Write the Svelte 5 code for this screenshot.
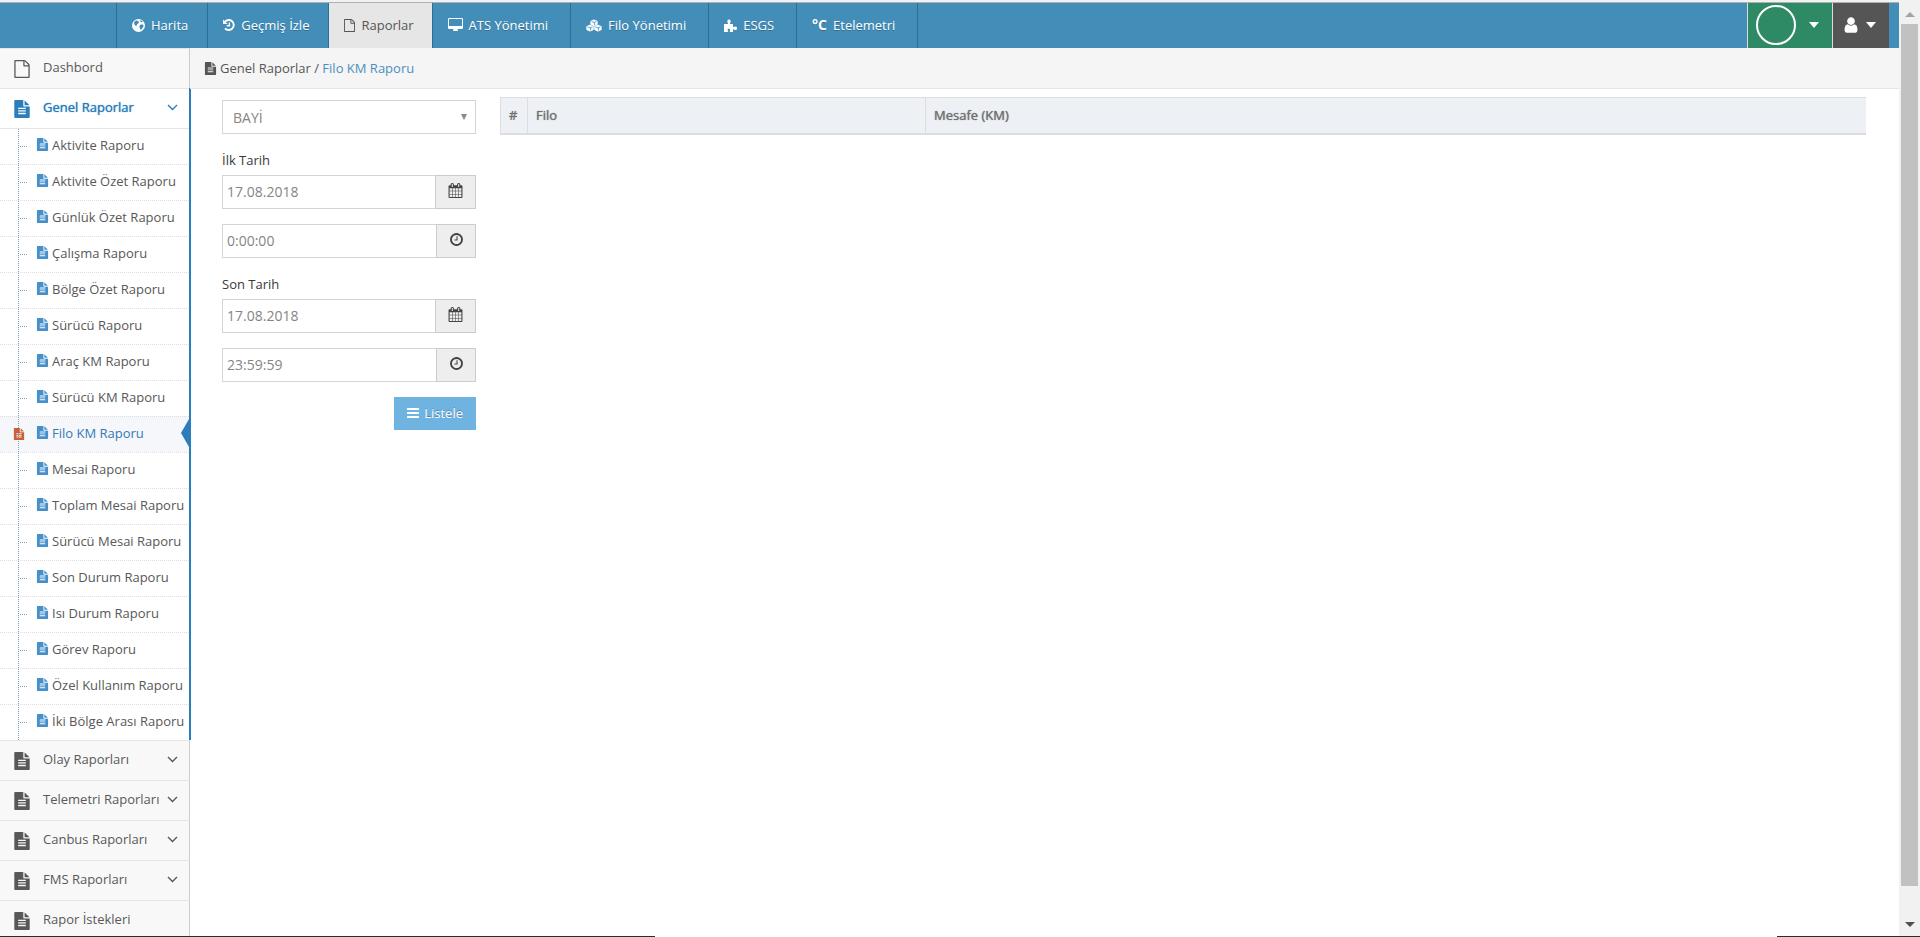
<script lang="ts">
	const icons = {
		file: 'M1596 380q28 28 48 76t20 88v1152q0 40-28 68t-68 28h-1344q-40 0-68-28t-28-68v-1600q0-40 28-68t68-28h896q40 0 88 20t76 48zm-444-244v376h376q-10-29-22-41l-313-313q-12-12-41-22zm384 1528v-1024h-416q-40 0-68-28t-28-68v-416h-768v1536h1280z',
		fileText: 'M1596 476q14 14 28 36h-472v-472q22 14 36 28zm-476 164h544v1056q0 40-28 68t-68 28h-1344q-40 0-68-28t-28-68v-1600q0-40 28-68t68-28h800v544q0 40 28 68t68 28zm160 736v-64q0-14-9-23t-23-9h-704q-14 0-23 9t-9 23v64q0 14 9 23t23 9h704q14 0 23-9t9-23zm0-256v-64q0-14-9-23t-23-9h-704q-14 0-23 9t-9 23v64q0 14 9 23t23 9h704q14 0 23-9t9-23zm0-256v-64q0-14-9-23t-23-9h-704q-14 0-23 9t-9 23v64q0 14 9 23t23 9h704q14 0 23-9t9-23z',
		clock: 'M1024 544v448q0 14-9 23t-23 9h-320q-14 0-23-9t-9-23v-64q0-14 9-23t23-9h224v-352q0-14 9-23t23-9h64q14 0 23 9t9 23zm416 352q0-148-73-273t-198-198-273-73-273 73-198 198-73 273 73 273 198 198 273 73 273-73 198-198 73-273zm224 0q0 209-103 385.500t-279.500 279.500-385.500 103-385.500-103-279.500-279.500-103-385.500 103-385.500 279.500-279.500 385.500-103 385.500 103 279.500 279.500 103 385.500z',
		calendar: 'M192 1664h288v-288h-288v288zm352 0h320v-288h-320v288zm-352-352h288v-320h-288v320zm352 0h320v-320h-320v320zm-352-384h288v-288h-288v288zm736 736h320v-288h-320v288zm-384-736h320v-288h-320v288zm768 736h288v-288h-288v288zm-384-352h320v-320h-320v320zm-352-864v-288q0-13-9.500-22.500t-22.500-9.500h-64q-13 0-22.500 9.500t-9.500 22.500v288q0 13 9.500 22.500t22.500 9.500h64q13 0 22.500-9.500t9.500-22.500zm736 864h288v-320h-288v320zm-384-384h320v-288h-320v288zm384 0h288v-288h-288v288zm32-480v-288q0-13-9.500-22.500t-22.500-9.500h-64q-13 0-22.500 9.500t-9.500 22.500v288q0 13 9.500 22.500t22.500 9.500h64q13 0 22.500-9.500t9.500-22.500zm384-64v1280q0 52-38 90t-90 38h-1408q-52 0-90-38t-38-90v-1280q0-52 38-90t90-38h128v-96q0-66 47-113t113-47h64q66 0 113 47t47 113v96h384v-96q0-66 47-113t113-47h64q66 0 113 47t47 113v96h128q52 0 90 38t38 90z',
		desktop: 'M1728 992v-832q0-13-9.500-22.500t-22.500-9.500h-1600q-13 0-22.500 9.500t-9.500 22.500v832q0 13 9.500 22.500t22.500 9.500h1600q13 0 22.500-9.500t9.500-22.500zm128-832v1088q0 66-47 113t-113 47h-544q0 37 16 77.500t32 71 16 43.500q0 26-19 45t-45 19h-512q-26 0-45-19t-19-45q0-14 16-44t32-70 16-78h-544q-66 0-113-47t-47-113v-1088q0-66 47-113t113-47h1600q66 0 113 47t47 113z',
		user: 'M1536 1399q0 109-62.500 187t-150.500 78h-854q-88 0-150.500-78t-62.500-187q0-85 8.500-160.500t31.500-152 58.500-131 94-89 134.500-34.500q131 128 313 128t313-128q76 0 134.500 34.500t94 89 58.500 131 31.500 152 8.500 160.500zm-256-887q0 159-112.500 271.500t-271.500 112.500-271.500-112.500-112.500-271.500 112.500-271.500 271.500-112.500 271.500 112.500 112.500 271.500z',
		bars: 'M1664 1344v128q0 26-19 45t-45 19h-1408q-26 0-45-19t-19-45v-128q0-26 19-45t45-19h1408q26 0 45 19t19 45zm0-512v128q0 26-19 45t-45 19h-1408q-26 0-45-19t-19-45v-128q0-26 19-45t45-19h1408q26 0 45 19t19 45zm0-512v128q0 26-19 45t-45 19h-1408q-26 0-45-19t-19-45v-128q0-26 19-45t45-19h1408q26 0 45 19t19 45z'
	};

	const navItems = [
		{ icon: 'globe', label: 'Harita' },
		{ icon: 'history', label: 'Geçmiş İzle' },
		{ icon: 'file', label: 'Raporlar', active: true },
		{ icon: 'desktop', label: 'ATS Yönetimi' },
		{ icon: 'cubes', label: 'Filo Yönetimi' },
		{ icon: 'puzzle', label: 'ESGS' },
		{ icon: 'degree', label: 'Etelemetri' }
	];

	const reports = [
		'Aktivite Raporu',
		'Aktivite Özet Raporu',
		'Günlük Özet Raporu',
		'Çalışma Raporu',
		'Bölge Özet Raporu',
		'Sürücü Raporu',
		'Araç KM Raporu',
		'Sürücü KM Raporu',
		'Filo KM Raporu',
		'Mesai Raporu',
		'Toplam Mesai Raporu',
		'Sürücü Mesai Raporu',
		'Son Durum Raporu',
		'Isı Durum Raporu',
		'Görev Raporu',
		'Özel Kullanım Raporu',
		'İki Bölge Arası Raporu'
	];

	const groups = [
		{ label: 'Olay Raporları', arrow: true },
		{ label: 'Telemetri Raporları', arrow: true },
		{ label: 'Canbus Raporları', arrow: true },
		{ label: 'FMS Raporları', arrow: true },
		{ label: 'Rapor İstekleri', arrow: false }
	];

	let current = $state('Filo KM Raporu');
	let open = $state(true);
	let firstDate = $state('17.08.2018');
	let firstTime = $state('0:00:00');
	let lastDate = $state('17.08.2018');
	let lastTime = $state('23:59:59');
</script>

{#snippet icon(name: string, size: number)}
	<svg width={size} height={size} viewBox="0 0 1792 1792" fill="currentColor" aria-hidden="true">
		<path d={icons[name]} />
	</svg>
{/snippet}

{#snippet chevron()}
	<svg class="chevron" width="11" height="7" viewBox="0 0 11 7" fill="none" stroke="currentColor" stroke-width="1.4" aria-hidden="true">
		<path d="M1 1l4.500 4.500L10 1" />
	</svg>
{/snippet}

{#snippet caret()}
	<svg width="10" height="6" viewBox="0 0 10 6" fill="currentColor" aria-hidden="true">
		<path d="M0 0h10L5 6z" />
	</svg>
{/snippet}

{#snippet navIcon(name: string)}
	{#if name === 'globe'}
		<svg width="13" height="13" viewBox="0 0 13 13" aria-hidden="true">
			<circle cx="6.500" cy="6.500" r="6.500" fill="#fff" />
			<path d="M2 3.200L4 1.600l1.600.2 1.400 1-.4 1.500-1.300.8-.4 1.300-1.400.3-1.100-1.100zM7.800 1.200l1.600.4 1.300 1.200-.9.500-1.200-.5zM7.200 7.200l1.500-1.700 2 .1.900.9-.5 1.800-1.600 1.900-1.300.6-.3-1.700z" fill="#438eb9" />
		</svg>
	{:else if name === 'history'}
		<svg width="12" height="12" viewBox="0 0 12 12" fill="none" stroke="#fff" stroke-width="1.900" aria-hidden="true">
			<path d="M1.800 2.900A5 5 0 1 1 2 9.300" />
			<path d="M6.400 3.400v3.300H3.700" stroke-width="1.400" />
			<path d="M0 .4V5h4.600z" fill="#fff" stroke="none" />
		</svg>
	{:else if name === 'desktop'}
		<svg width="15" height="14" viewBox="-64 0 1920 1792" fill="#fff" aria-hidden="true">
			<path d={icons.desktop} />
		</svg>
	{:else if name === 'cubes'}
		<svg width="16" height="13" viewBox="0 0 17 13" aria-hidden="true">
			<g fill="#fff" stroke="#fff" stroke-width=".8" stroke-linejoin="round">
				<path d="M8.500.5l3.400 1.400v3.400L8.500 6.900 5.100 5.300V1.900z" />
				<path d="M4.300 6l3.500 1.500v3.400l-3.500 1.600L.8 10.900V7.500z" />
				<path d="M12.700 6l3.500 1.500v3.400l-3.500 1.600-3.500-1.600V7.500z" />
			</g>
			<g fill="none" stroke="#438eb9" stroke-width=".9">
				<path d="M6 2.300l2.500 1 2.500-1M9.100 6V3.600M1.700 8l2.600 1.100L6.900 8M4.900 11.700V9.200M10.100 8l2.600 1.100L15.300 8M13.300 11.700V9.200" />
			</g>
		</svg>
	{:else if name === 'puzzle'}
		<svg width="13" height="13" viewBox="0 0 13 13" fill="#fff" aria-hidden="true">
			<path d="M0 5h3.600c.5 0 .7-.4.4-.8C3.300 3.200 3.100 2.300 3.500 1.400 4 .3 6 .3 6.500 1.400c.4.900.2 1.800-.5 2.800-.3.400-.1.800.4.800H9v2.500c0 .5.500.8 1 .4.900-.7 2.200-.7 2.700.2.400.7.400 1.700 0 2.300-.5.900-1.800.8-2.700.1-.5-.4-1-.1-1 .4v2H6.300c-.5 0-.8-.4-.5-.9.600-1 .5-2.300-.9-2.300s-1.600 1.300-.9 2.300c.3.500 0 .9-.5.900H0z" />
		</svg>
	{:else if name === 'degree'}
		<span class="degree">°C</span>
	{:else}
		<svg width="11" height="13" viewBox="128 0 1536 1792" fill="currentColor" aria-hidden="true">
			<path d={icons.file} />
		</svg>
	{/if}
{/snippet}

<div class="window">
	<div class="page">
		<header>
			<nav>
				{#each navItems as item}
					<a href="#top" class:active={item.active}>{@render navIcon(item.icon)}{item.label}</a>
				{/each}
			</nav>
			<button class="company" type="button" aria-label="Firma">
				<span class="ring"></span>
				{@render caret()}
			</button>
			<button class="account" type="button" aria-label="Kullanıcı">
				{@render icon('user', 18)}
				{@render caret()}
			</button>
		</header>

		<div class="body">
			<aside>
				<a class="group" href="#dashbord">{@render icon('file', 18)}<span>Dashbord</span></a>
				<div class="opened">
					<button class="group current" type="button" onclick={() => (open = !open)}>
						{@render icon('fileText', 18)}<span>Genel Raporlar</span>{@render chevron()}
					</button>
					{#if open}
						<ul>
							{#each reports as report}
								<li class:selected={report === current}>
									<a href="#rapor" onclick={() => (current = report)}>
										{@render icon('fileText', 13)}{report}
									</a>
									{#if report === current}
										<span class="marker">{@render icon('fileText', 12)}</span>
									{/if}
								</li>
							{/each}
						</ul>
					{/if}
				</div>
				{#each groups as group}
					<a class="group" href="#grup">
						{@render icon('fileText', 18)}<span>{group.label}</span>
						{#if group.arrow}{@render chevron()}{/if}
					</a>
				{/each}
			</aside>

			<main>
				<div class="breadcrumb">
					{@render icon('fileText', 13)}
					<span>Genel Raporlar / <a href="#rapor">Filo KM Raporu</a></span>
				</div>
				<div class="content">
					<form onsubmit={(e) => e.preventDefault()}>
						<div class="select">
							<select aria-label="Bayi">
								<option>BAYİ</option>
							</select>
						</div>
						<label for="first-date">İlk Tarih</label>
						<div class="field">
							<input id="first-date" type="text" bind:value={firstDate} />
							<button type="button" aria-label="Takvim">{@render icon('calendar', 15)}</button>
						</div>
						<div class="field">
							<input type="text" aria-label="İlk saat" bind:value={firstTime} />
							<button class="time" type="button" aria-label="Saat">{@render icon('clock', 15)}</button>
						</div>
						<label for="last-date">Son Tarih</label>
						<div class="field">
							<input id="last-date" type="text" bind:value={lastDate} />
							<button type="button" aria-label="Takvim">{@render icon('calendar', 15)}</button>
						</div>
						<div class="field">
							<input type="text" aria-label="Son saat" bind:value={lastTime} />
							<button class="time" type="button" aria-label="Saat">{@render icon('clock', 15)}</button>
						</div>
						<button class="submit" type="submit">{@render icon('bars', 14)}Listele</button>
					</form>

					<table>
						<thead>
							<tr>
								<th class="no">#</th>
								<th class="fleet">Filo</th>
								<th>Mesafe (KM)</th>
							</tr>
						</thead>
					</table>
				</div>
			</main>
		</div>
	</div>

	<div class="scrollbar" aria-hidden="true">
		<svg width="10" height="5" viewBox="0 0 10 5"><path d="M0 5h10L5 0z" fill="#a3a3a3" /></svg>
		<div class="thumb"></div>
		<svg width="10" height="5" viewBox="0 0 10 5"><path d="M0 0h10L5 5z" fill="#505050" /></svg>
	</div>
	<div class="edge left"></div>
	<div class="edge right"></div>
</div>

<style>
	:global(body) {
		background: #fff;
	}

	.window {
		position: relative;
		display: flex;
		box-sizing: border-box;
		height: 100vh;
		overflow: hidden;
		border-top: 2px solid #f2f2f2;
		font-family: 'Open Sans', sans-serif;
		font-size: 13px;
		line-height: 20px;
		color: #393939;
	}

	.window * {
		box-sizing: border-box;
	}

	.page {
		flex: 1;
		display: flex;
		flex-direction: column;
		min-width: 0;
		border-top: 1px solid #b0b0b0;
	}

	a {
		color: inherit;
		text-decoration: none;
	}

	button,
	input,
	select {
		font: inherit;
		margin: 0;
		border-radius: 0;
	}

	svg {
		flex: none;
	}

	header {
		display: flex;
		height: 45px;
		flex: none;
		padding-right: 10px;
		background: #438eb9;
	}

	nav {
		display: flex;
		flex: 1;
		padding-left: 116px;
	}

	nav a {
		display: flex;
		align-items: center;
		gap: 6px;
		padding: 0 19px 1px 15px;
		border-left: 1px solid #2c6f94;
		color: #fff;
		text-shadow: 0 1px 0 rgba(0, 0, 0, 0.25);
	}

	nav a.active {
		padding-right: 18px;
		background: #e6e6e6;
		color: #555;
		text-shadow: none;
	}

	nav a.active ~ a {
		padding-right: 22px;
	}

	nav a:last-child {
		border-right: 1px solid #2c6f94;
	}

	.degree {
		font-weight: bold;
		font-size: 14px;
	}

	header button {
		display: flex;
		align-items: center;
		border: 0;
		border-left: 1px solid #ddd;
		color: #fff;
	}

	.company {
		gap: 13px;
		width: 85px;
		padding: 0 0 2px 8px;
		background: #2e8965;
	}

	.ring {
		width: 40px;
		height: 40px;
		border: 2px solid #fff;
		border-radius: 50%;
	}

	.account {
		gap: 6px;
		width: 57px;
		padding: 0 0 2px 9px;
		background: #555;
	}

	.body {
		display: flex;
		flex: 1;
		min-height: 0;
	}

	aside {
		flex: none;
		width: 191px;
		overflow: hidden;
		color: #585858;
	}

	.group {
		display: flex;
		align-items: center;
		width: 190px;
		height: 40px;
		padding: 0 11px 0 13px;
		border: 0;
		border-top: 1px solid #e5e5e5;
		border-right: 1px solid #ccc;
		background: #f8f8f8;
		text-align: left;
	}

	.group span {
		flex: 1;
		margin-left: 12px;
		padding-bottom: 3px;
		white-space: nowrap;
	}

	.chevron {
		margin-bottom: 2px;
	}

	.opened {
		border-right: 2px solid #2b7dbc;
	}

	.group.current {
		width: 100%;
		border-right: 0;
		background: #fff;
		color: #2b7dbc;
		text-shadow: 0 0 1px #2b7dbc;
	}

	ul {
		position: relative;
		margin: 0;
		padding: 0;
		border-top: 1px solid #e5e5e5;
		list-style: none;
	}

	/* tree line running down the submenu */
	ul::before {
		content: '';
		position: absolute;
		z-index: 1;
		top: 0;
		bottom: 0;
		left: 18px;
		border-left: 1px dotted #7e9db8;
	}

	li {
		position: relative;
		height: 36px;
		border-top: 1px dotted #ddd;
	}

	li:first-child {
		height: 35px;
		border-top: 0;
	}

	li::before {
		content: '';
		position: absolute;
		top: 17px;
		left: 20px;
		width: 7px;
		border-top: 1px dotted #7e9db8;
	}

	li a {
		display: flex;
		align-items: center;
		gap: 3px;
		height: 100%;
		padding: 0 0 4px 36px;
		white-space: nowrap;
	}

	li a :global(svg) {
		color: #478fca;
	}

	li.selected {
		background: #f5f7fa;
		color: #337ab7;
	}

	li.selected::before {
		display: none;
	}

	li.selected::after {
		content: '';
		position: absolute;
		top: 2px;
		right: 0;
		border: 14px solid transparent;
		border-left: 0;
		border-right: 8px solid #2b7dbc;
	}

	.marker {
		position: absolute;
		z-index: 2;
		top: 11px;
		left: 13px;
		display: flex;
		color: #c86139;
	}

	main {
		flex: 1;
		min-width: 0;
		margin-left: -1px;
	}

	.breadcrumb {
		display: flex;
		align-items: center;
		gap: 3px;
		height: 41px;
		padding-left: 14px;
		border-bottom: 1px solid #e5e5e5;
		background: #f5f5f5;
		color: #555;
	}

	.breadcrumb a {
		color: #4c8fbd;
	}

	.content {
		display: flex;
		align-items: flex-start;
		gap: 24px;
		padding: 8px 33px 0 32px;
	}

	form {
		flex: none;
		display: flex;
		flex-direction: column;
		width: 254px;
		padding-top: 3px;
	}

	.select {
		position: relative;
		margin-bottom: 15px;
	}

	.select::after {
		content: '';
		position: absolute;
		top: 14px;
		right: 9px;
		border: 3px solid transparent;
		border-top: 6px solid #888;
		border-bottom: 0;
		pointer-events: none;
	}

	select {
		display: block;
		width: 100%;
		height: 34px;
		padding: 2px 10px 0;
		border: 1px solid #d5d5d5;
		background: #fff;
		color: #858585;
		font-size: 14px;
		appearance: none;
	}

	label {
		padding: 1px 0 5px;
	}

	.field {
		display: flex;
		height: 34px;
		margin-bottom: 15px;
	}

	.field input {
		flex: 1;
		min-width: 0;
		padding: 0 4px;
		border: 1px solid #d5d5d5;
		border-right: 0;
		color: #858585;
		font-size: 14px;
	}

	.field button {
		display: flex;
		align-items: center;
		justify-content: center;
		width: 41px;
		padding: 0 0 3px;
		border: 1px solid #ccc;
		background: #eee;
		color: #444;
	}

	.field button.time {
		width: 40px;
	}

	.submit {
		display: flex;
		align-items: center;
		align-self: flex-end;
		gap: 4px;
		height: 33px;
		padding: 0 13px 2px 12px;
		border: 0;
		background: #6fb3e0;
		color: #fff;
		text-shadow: 0 -1px 0 rgba(0, 0, 0, 0.25);
	}

	table {
		flex: 1;
		width: 100%;
		border-collapse: collapse;
		table-layout: fixed;
		background: #edf0f5;
		color: #707070;
	}

	th {
		height: 36px;
		padding: 0 8px 1px;
		border: 1px solid #ddd;
		border-bottom-width: 2px;
		border-right: 0;
		font-weight: normal;
		text-align: left;
		text-shadow: 0 0 1px #707070;
	}

	.no {
		width: 27px;
	}

	.fleet {
		width: 398px;
	}

	.scrollbar {
		display: flex;
		flex-direction: column;
		align-items: center;
		width: 21px;
		padding: 10px 0 10px;
		background: #f1f1f1;
	}

	.thumb {
		flex: 1;
		width: 17px;
		margin: 7px 0 36px;
		background: #c1c1c1;
	}

	.edge {
		position: absolute;
		z-index: 3;
		bottom: 0;
		height: 1px;
		background: #2b2d30;
	}

	.left {
		left: 0;
		width: 655px;
	}

	.right {
		right: 0;
		width: 143px;
	}
</style>
